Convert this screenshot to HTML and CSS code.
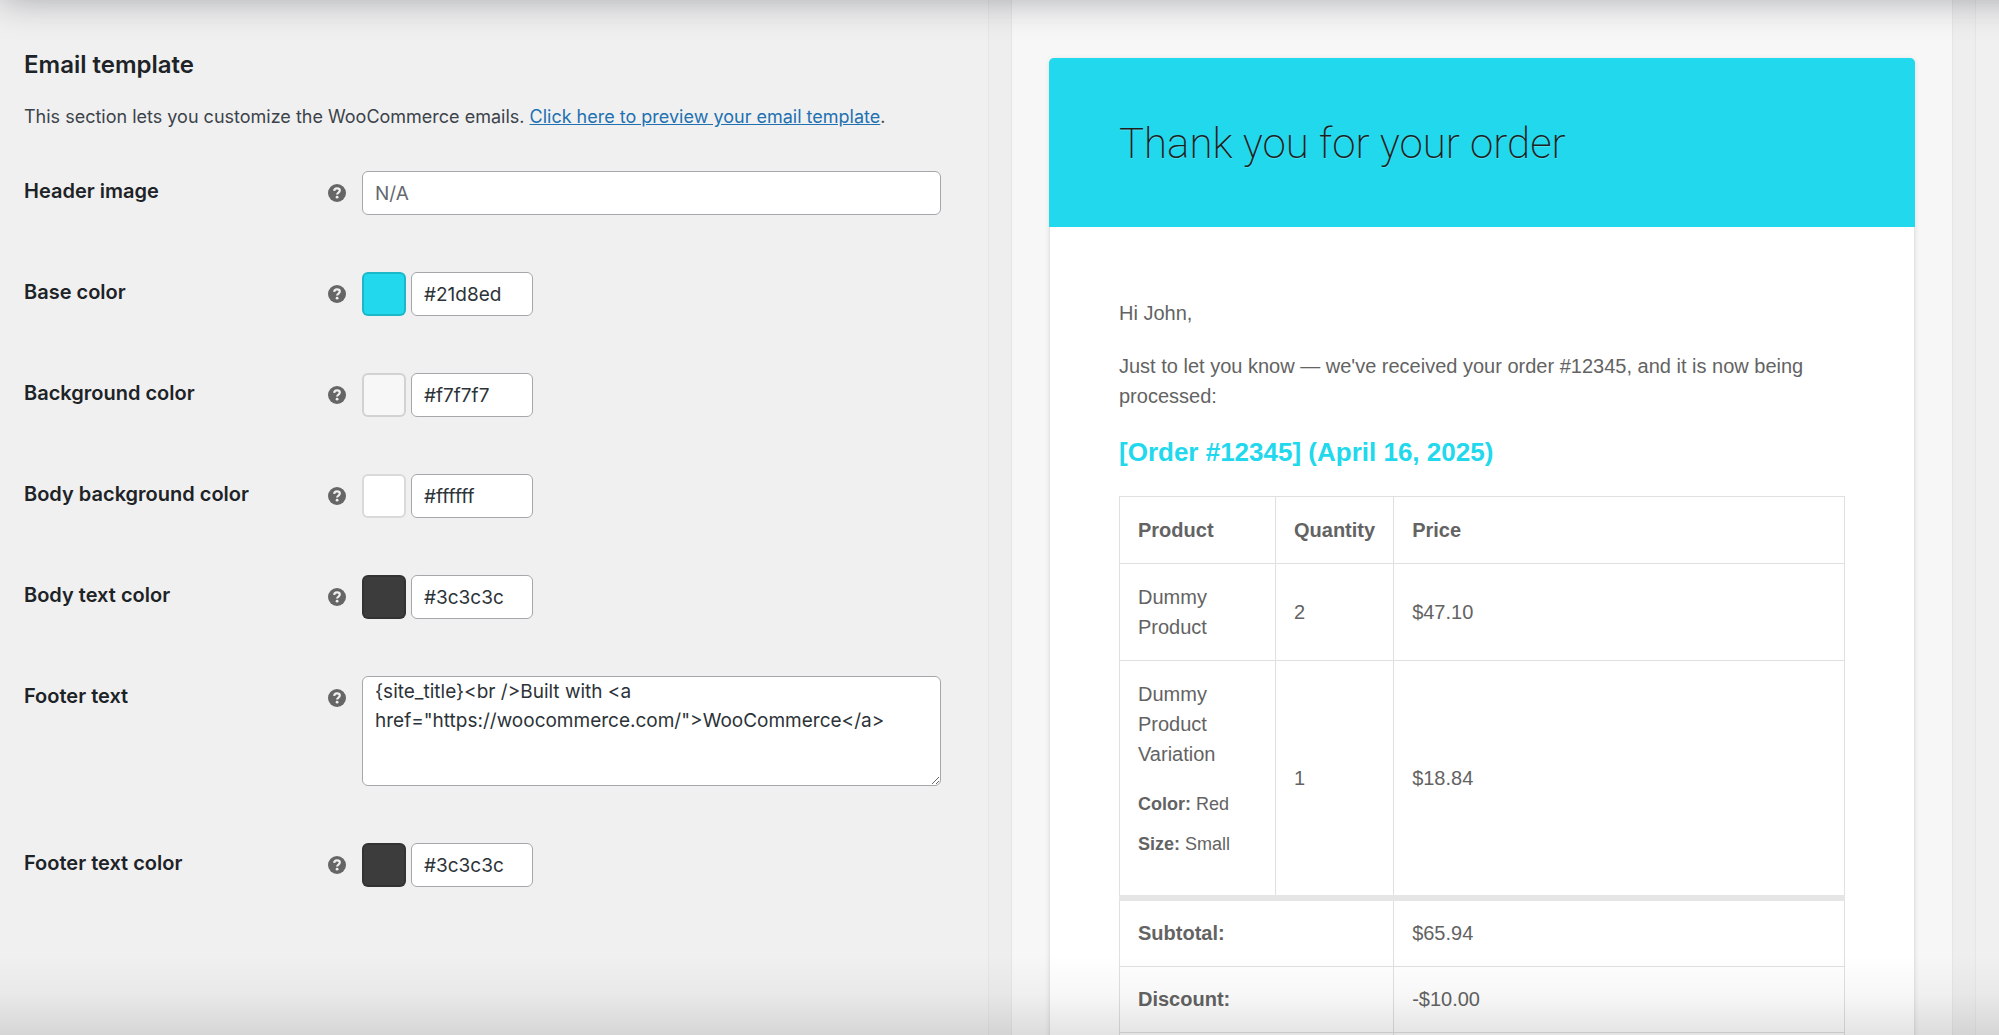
FILE: index.html
```html
<!DOCTYPE html>
<html lang="en">
<head>
    <meta charset="UTF-8">
    <meta name="viewport" content="width=device-width, initial-scale=1.0">
    <title>Email template</title>
    <link rel="stylesheet" href="styles.css">
</head>
<body>
    <svg class="sprite" aria-hidden="true">
        <symbol id="help" viewBox="0 0 18 18">
            <circle cx="9" cy="9" r="9" fill="#666"/>
            <path d="M6.200 6.900C6.300 5.200 7.400 4.400 9 4.400c1.700 0 2.800 0.900 2.800 2.200 0 2-2.700 1.900-2.700 4" fill="none" stroke="#f0f0f0" stroke-width="2.200"/>
            <circle cx="9.100" cy="13.200" r="1.400" fill="#f0f0f0"/>
        </symbol>
    </svg>

    <div class="layout">
        <form class="settings">
            <h2>Email template</h2>
            <p class="description">This section lets you customize the WooCommerce emails. <a href="#preview">Click here to preview your email template</a>.</p>

            <div class="field">
                <label for="header-image">Header image</label>
                <svg class="tip"><use href="#help"/></svg>
                <input type="text" id="header-image" class="wide" placeholder="N/A">
            </div>
            <div class="field">
                <label for="base-color">Base color</label>
                <svg class="tip"><use href="#help"/></svg>
                <div class="color">
                    <button type="button" class="swatch base" aria-label="Pick base color"></button>
                    <input type="text" id="base-color" value="#21d8ed">
                </div>
            </div>
            <div class="field">
                <label for="bg-color">Background color</label>
                <svg class="tip"><use href="#help"/></svg>
                <div class="color">
                    <button type="button" class="swatch bg" aria-label="Pick background color"></button>
                    <input type="text" id="bg-color" value="#f7f7f7">
                </div>
            </div>
            <div class="field">
                <label for="body-bg-color">Body background color</label>
                <svg class="tip"><use href="#help"/></svg>
                <div class="color">
                    <button type="button" class="swatch body-bg" aria-label="Pick body background color"></button>
                    <input type="text" id="body-bg-color" value="#ffffff">
                </div>
            </div>
            <div class="field">
                <label for="body-text-color">Body text color</label>
                <svg class="tip"><use href="#help"/></svg>
                <div class="color">
                    <button type="button" class="swatch text" aria-label="Pick body text color"></button>
                    <input type="text" id="body-text-color" value="#3c3c3c">
                </div>
            </div>
            <div class="field">
                <label for="footer-text">Footer text</label>
                <svg class="tip"><use href="#help"/></svg>
                <textarea id="footer-text" class="wide" spellcheck="false">{site_title}&lt;br /&gt;Built with &lt;a href="https://woocommerce.com/"&gt;WooCommerce&lt;/a&gt;</textarea>
            </div>
            <div class="field">
                <label for="footer-text-color">Footer text color</label>
                <svg class="tip"><use href="#help"/></svg>
                <div class="color">
                    <button type="button" class="swatch text" aria-label="Pick footer text color"></button>
                    <input type="text" id="footer-text-color" value="#3c3c3c">
                </div>
            </div>
        </form>

        <div class="gutter"></div>

        <div class="preview" id="preview">
            <div class="email">
                <h1>Thank you for your order</h1>
                <div class="email-body">
                    <p>Hi John,</p>
                    <p>Just to let you know — we've received your order #12345, and it is now being processed:</p>
                    <h2>[Order #12345] (April 16, 2025)</h2>
                    <table>
                        <thead>
                            <tr>
                                <th class="product">Product</th>
                                <th class="quantity">Quantity</th>
                                <th>Price</th>
                            </tr>
                        </thead>
                        <tbody>
                            <tr>
                                <td>Dummy Product</td>
                                <td>2</td>
                                <td>$47.10</td>
                            </tr>
                            <tr>
                                <td>Dummy Product Variation
                                    <ul>
                                        <li><strong>Color:</strong> Red</li>
                                        <li><strong>Size:</strong> Small</li>
                                    </ul>
                                </td>
                                <td>1</td>
                                <td>$18.84</td>
                            </tr>
                        </tbody>
                        <tfoot>
                            <tr>
                                <th colspan="2">Subtotal:</th>
                                <td>$65.94</td>
                            </tr>
                            <tr>
                                <th colspan="2">Discount:</th>
                                <td>-$10.00</td>
                            </tr>
                            <tr>
                                <th colspan="2"></th>
                                <td></td>
                            </tr>
                        </tfoot>
                    </table>
                </div>
            </div>
        </div>

        <div class="gutter"></div>
    </div>

    <div class="shade-top"></div>
    <div class="shade-bottom"></div>
</body>
</html>
```
FILE: styles.css
```css
* { box-sizing: border-box; }
body {
    margin: 0;
    background: #f0f0f0;
    color: #3c434a;
    font-family: Inter, "Liberation Sans", sans-serif;
    font-size: 18px;
    overflow: hidden;
}
.sprite { position: absolute; width: 0; height: 0; }

.layout {
    display: grid;
    grid-template-columns: minmax(0, 988fr) 24px minmax(0, 940fr) 24px 23px;
    height: 100vh;
    overflow: hidden;
}
.gutter {
    background: #eeeeee;
    border-left: 1px solid #e6e6e6;
    border-right: 1px solid #e6e6e6;
}

/* settings form */
.settings { padding: 49px 47px 0 24px; }
.settings h2 {
    margin: 0;
    font-size: 24px;
    line-height: 32px;
    font-weight: 600;
    color: #1d2327;
}
.description { margin: 22px 0 40px; line-height: 28px; white-space: nowrap; }
.description a { color: #2271b1; }
.field {
    display: grid;
    grid-template-columns: 304px 34px minmax(0, 1fr);
    align-items: start;
    margin-bottom: 57px;
}
.field label {
    line-height: 40px;
    font-size: 20px;
    font-weight: 600;
    color: #1d2327;
}
.tip { width: 18px; height: 18px; margin-top: 13px; }
.color { display: flex; gap: 5px; }
input, textarea {
    height: 44px;
    padding: 0 12px;
    border: 1px solid #a5a7ab;
    border-radius: 6px;
    background: #fff;
    color: #2c3338;
    font-family: inherit;
    font-size: 19px;
}
input::placeholder { color: #646970; }
.color input { width: 122px; }
.wide { width: 100%; }
textarea {
    display: block;
    height: 110px;
    line-height: 29px;
    resize: vertical;
}
.swatch {
    width: 44px;
    height: 44px;
    padding: 0;
    border: 2px solid rgba(0, 0, 0, 0.15);
    border-radius: 6px;
}
.base { background: #21d8ed; }
.bg { background: #f7f7f7; }
.body-bg { background: #fff; }
.text { background: #3c3c3c; }

/* email preview */
.preview { padding: 58px 37px 0; background: #f7f7f7; }
.email {
    min-height: 100%;
    background: #fff;
    border: 1px solid #e4e4e4;
    border-top: none;
    border-radius: 5px;
    box-shadow: 0 1px 5px rgba(0, 0, 0, 0.1);
    color: #636363;
    font-family: "Liberation Sans", Arial, sans-serif;
    font-size: 20px;
    line-height: 30px;
}
.email h1 {
    margin: 0 -1px;
    padding: 53px 70px 51px;
    border-radius: 5px 5px 0 0;
    background: #21d8ed;
    color: #1f1f1f;
    font-family: Roboto, "Liberation Sans", sans-serif;
    font-size: 42px;
    line-height: 65px;
    font-weight: 200;
    text-shadow: 0 1px 0 #4de0f1;
}
.email-body { padding: 71px 69px 0; }
.email-body p { margin: 0 0 23px; }
.email-body h2 {
    margin: 0 0 26px;
    font-size: 26px;
    line-height: 36px;
    color: #21d8ed;
}
table {
    width: 100%;
    border: 1px solid #e0e0e0;
    border-collapse: collapse;
}
th, td {
    padding: 18px;
    border: 1px solid #e0e0e0;
    text-align: left;
    vertical-align: middle;
}
.product { width: 156px; }
.quantity { width: 116px; }
tfoot tr:first-child th, tfoot tr:first-child td { border-top: 6px solid #e5e5e5; }
tfoot th, tfoot td { padding: 17px 18px 18px; }
ul { margin: 20px 0 18px; padding: 0; list-style: none; font-size: 18px; }
li + li { margin-top: 10px; }

/* shadows at the edges of the scroll area */
.shade-top {
    position: absolute;
    top: -60px;
    left: 0;
    right: -60px;
    height: 60px;
    box-shadow: 0 0 36px rgba(20, 24, 34, 0.34);
}
.shade-bottom {
    position: absolute;
    left: 0;
    right: 0;
    bottom: 0;
    height: 80px;
    background: linear-gradient(transparent, rgba(0, 0, 0, 0.03) 50%, rgba(0, 0, 0, 0.11));
    pointer-events: none;
}
```
